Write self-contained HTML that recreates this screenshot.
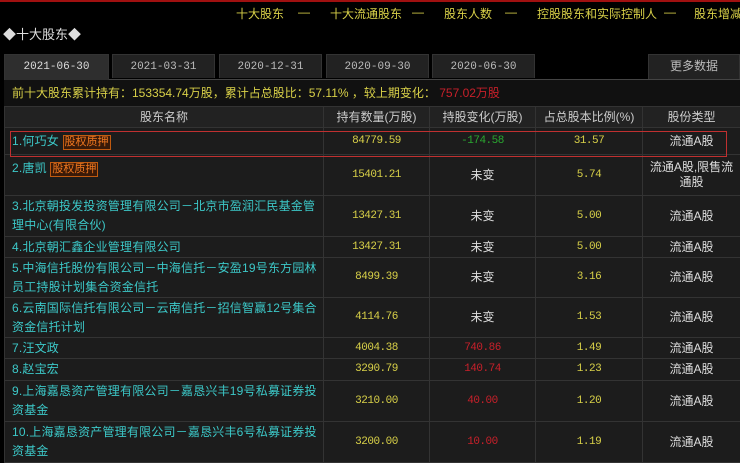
<!DOCTYPE html>
<html><head><meta charset="utf-8"><style>
*{margin:0;padding:0;box-sizing:border-box}
body{width:740px;height:462px;background:#000;overflow:hidden;position:relative;font-family:"Liberation Mono","Noto Sans CJK SC",monospace;font-size:12px}
.topline{position:absolute;left:0;top:0;width:740px;height:2px;background:#a01010}
.nav span{position:absolute;top:5px;white-space:nowrap;color:#d8d048;font-size:12px;font-family:"Liberation Sans","Noto Sans CJK SC",sans-serif}
.title{position:absolute;top:24px;left:3px;color:#ddd;font-size:13px;font-family:"Liberation Sans","Noto Sans CJK SC",sans-serif}
.tab{position:absolute;top:54px;height:24px;background:#222;border:1px solid #333;border-bottom:none;color:#bbb;text-align:center;line-height:24px;font-size:11px}
.tab.a{background:#2e2e2e;color:#ddd;height:26px}
.panel{position:absolute;left:4px;top:79px;width:736px;height:383px;background:#1c1c1c;border-top:1px solid #444}
.sum{position:absolute;left:4px;top:80px;width:736px;height:26px;background:#111;color:#d8d048;line-height:26px;padding-left:8px;font-family:"Liberation Sans","Noto Sans CJK SC",sans-serif;font-size:12px}
table{position:absolute;left:4px;top:106px;width:736px;border-collapse:collapse;table-layout:fixed}
td,th{border:1px solid #333;font-weight:normal;text-align:center;vertical-align:middle;line-height:19px;padding:0 2px;overflow:hidden}
th{background:#222;color:#ccc;height:21px;font-family:"Liberation Sans","Noto Sans CJK SC",sans-serif}
td{background:#1c1c1c;color:#d8d048;font-size:11px;letter-spacing:-0.5px}
td.n{text-align:left;color:#3cc8c8;padding-left:7px;font-family:"Liberation Sans","Noto Sans CJK SC",sans-serif;font-size:12px;letter-spacing:0.2px}
td.t{color:#ddd;font-family:"Liberation Sans","Noto Sans CJK SC",sans-serif;font-size:12px;letter-spacing:0}
td.u{color:#ddd;font-family:"Liberation Sans","Noto Sans CJK SC",sans-serif;font-size:12px;letter-spacing:0}
.g{color:#2aa830}.r{color:#c8202a}
.tag{color:#f07820;border:1px solid #c05a10;background:#3a1a08;padding:0 1px;font-size:11px;line-height:13px;display:inline-block;letter-spacing:0}
.box{position:absolute;left:10px;top:131px;width:717px;height:26px;border:1px solid #c03030}
</style></head><body>
<div class="topline"></div>
<div class="nav"><span style="left:236px">十大股东</span><span style="left:298px">—</span><span style="left:330px">十大流通股东</span><span style="left:412px">—</span><span style="left:444px">股东人数</span><span style="left:505px">—</span><span style="left:537px">控股股东和实际控制人</span><span style="left:664px">—</span><span style="left:694px">股东增减持</span></div>
<div class="title">◆十大股东◆</div>
<div class="panel"></div>
<div class="tab a" style="left:4px;width:105px">2021-06-30</div>
<div class="tab" style="left:112px;width:103px">2021-03-31</div>
<div class="tab" style="left:219px;width:103px">2020-12-31</div>
<div class="tab" style="left:326px;width:103px">2020-09-30</div>
<div class="tab" style="left:432px;width:103px">2020-06-30</div>
<div class="tab" style="left:648px;width:92px;top:54px;height:25px;font-size:12px">更多数据</div>
<div class="sum">前十大股东累计持有：153354.74万股，累计占总股比：57.11% ，较上期变化： <span class="r">757.02万股</span></div>
<table>
<colgroup><col style="width:319px"><col style="width:106px"><col style="width:106px"><col style="width:107px"><col style="width:98px"></colgroup>
<tr><th>股东名称</th><th>持有数量(万股)</th><th>持股变化(万股)</th><th>占总股本比例(%)</th><th>股份类型</th></tr>
<tr style="height:27px"><td class="n">1.何巧女 <span class="tag">股权质押</span></td><td>84779.59</td><td class="g">-174.58</td><td>31.57</td><td class="u">流通A股</td></tr>
<tr style="height:41px"><td class="n" style="vertical-align:top;padding-top:4px">2.唐凯 <span class="tag">股权质押</span></td><td>15401.21</td><td class="t">未变</td><td>5.74</td><td class="u" style="line-height:15px">流通A股,限售流通股</td></tr>
<tr style="height:41px"><td class="n">3.北京朝投发投资管理有限公司－北京市盈润汇民基金管理中心(有限合伙)</td><td>13427.31</td><td class="t">未变</td><td>5.00</td><td class="u">流通A股</td></tr>
<tr style="height:21px"><td class="n">4.北京朝汇鑫企业管理有限公司</td><td>13427.31</td><td class="t">未变</td><td>5.00</td><td class="u">流通A股</td></tr>
<tr style="height:40px"><td class="n">5.中海信托股份有限公司－中海信托－安盈19号东方园林员工持股计划集合资金信托</td><td>8499.39</td><td class="t">未变</td><td>3.16</td><td class="u">流通A股</td></tr>
<tr style="height:40px"><td class="n">6.云南国际信托有限公司－云南信托－招信智赢12号集合资金信托计划</td><td>4114.76</td><td class="t">未变</td><td>1.53</td><td class="u">流通A股</td></tr>
<tr style="height:21px"><td class="n">7.汪文政</td><td>4004.38</td><td class="r">740.86</td><td>1.49</td><td class="u">流通A股</td></tr>
<tr style="height:22px"><td class="n">8.赵宝宏</td><td>3290.79</td><td class="r">140.74</td><td>1.23</td><td class="u">流通A股</td></tr>
<tr style="height:41px"><td class="n">9.上海嘉恳资产管理有限公司－嘉恳兴丰19号私募证券投资基金</td><td>3210.00</td><td class="r">40.00</td><td>1.20</td><td class="u">流通A股</td></tr>
<tr style="height:41px"><td class="n">10.上海嘉恳资产管理有限公司－嘉恳兴丰6号私募证券投资基金</td><td>3200.00</td><td class="r">10.00</td><td>1.19</td><td class="u">流通A股</td></tr>
</table>
<div class="box"></div>
</body></html>
